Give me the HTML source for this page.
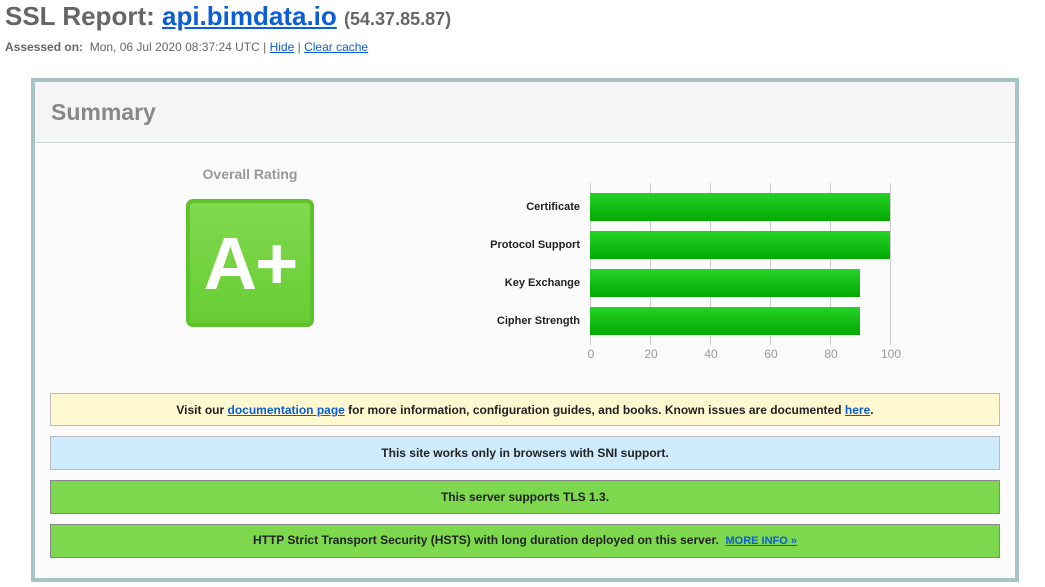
<!DOCTYPE html>
<html><head><meta charset="utf-8"><style>
*{margin:0;padding:0;box-sizing:border-box}
body{width:1045px;height:587px;background:#fff;font-family:"Liberation Sans",sans-serif;position:relative;overflow:hidden}
a{color:#0c5ed6}
.abs{position:absolute}
h1{position:absolute;left:5px;top:1px;font-size:26px;font-weight:bold;color:#666;line-height:30px;white-space:nowrap}
h1 .ip{font-size:18px}
.ass{position:absolute;left:5px;top:40px;font-size:12px;color:#666;white-space:nowrap}
.box{position:absolute;left:31px;top:78px;width:988px;height:504px;border:4px solid #a6c3c5;background:#fbfbfb}
.hdr{position:absolute;left:0;top:0;width:980px;height:61px;background:#f5f5f5;border-bottom:1px solid #cfd6d8}
.hdr span{position:absolute;left:16px;top:17px;font-size:23px;font-weight:bold;color:#888}
.lbl{position:absolute;font-size:11px;font-weight:bold;color:#222;text-align:right;width:150px;left:430px}
.grid{position:absolute;top:183px;width:1px;height:162px;background:#ccc}
.bar{position:absolute;left:590px;height:28px;background:linear-gradient(#27d327,#02a902)}
.ax{position:absolute;top:347px;font-size:12px;color:#999;width:30px;text-align:center}
.note{position:absolute;left:50px;width:950px;font-size:12px;font-weight:bold;color:#222;text-align:center;border:1px solid}
</style></head><body>
<h1>SSL Report: <a href="#">api.bimdata.io</a> <span class="ip">(54.37.85.87)</span></h1>
<div class="ass"><b>Assessed on:</b>&nbsp; Mon, 06 Jul 2020 08:37:24 UTC | <a href="#">Hide</a> | <a href="#">Clear cache</a></div>
<div class="box"><div class="hdr"><span>Summary</span></div></div>
<div class="abs" style="left:150px;top:166px;width:200px;text-align:center;font-size:14px;font-weight:bold;color:#999">Overall Rating</div>
<div class="abs" style="left:186px;top:199px;width:128px;height:128px;border-radius:7px;background:linear-gradient(#82d94f,#67cd33);border:4px solid #5ec22c;color:#fff;font-size:74px;font-weight:bold;text-align:center;line-height:122px;letter-spacing:-2px">A+</div>
<div class="grid" style="left:590px"></div><div class="grid" style="left:650px"></div><div class="grid" style="left:710px"></div><div class="grid" style="left:770px"></div><div class="grid" style="left:830px"></div><div class="grid" style="left:890px"></div>
<div class="bar" style="top:193px;width:300px"></div>
<div class="bar" style="top:231px;width:300px"></div>
<div class="bar" style="top:269px;width:270px"></div>
<div class="bar" style="top:307px;width:270px"></div>
<div class="lbl" style="top:201px">Certificate</div>
<div class="lbl" style="top:239px">Protocol Support</div>
<div class="lbl" style="top:277px">Key Exchange</div>
<div class="lbl" style="top:315px">Cipher Strength</div>
<div class="ax" style="left:576px">0</div><div class="ax" style="left:636px">20</div><div class="ax" style="left:696px">40</div><div class="ax" style="left:756px">60</div><div class="ax" style="left:816px">80</div><div class="ax" style="left:876px">100</div>
<div class="note" style="top:393px;height:33px;line-height:32px;background:#fff8d0;border-color:#bbb">Visit our <a href="#">documentation page</a> for more information, configuration guides, and books. Known issues are documented <a href="#">here</a>.</div>
<div class="note" style="top:436px;height:34px;line-height:32px;background:#ceecfd;border-color:#bbb">This site works only in browsers with SNI support.</div>
<div class="note" style="top:480px;height:34px;line-height:32px;background:#7ed84d;border-color:#888">This server supports TLS 1.3.</div>
<div class="note" style="top:524px;height:34px;line-height:31px;background:#7ed84d;border-color:#888">HTTP Strict Transport Security (HSTS) with long duration deployed on this server. &nbsp;<a href="#" style="font-size:11px">MORE INFO »</a></div>
</body></html>
